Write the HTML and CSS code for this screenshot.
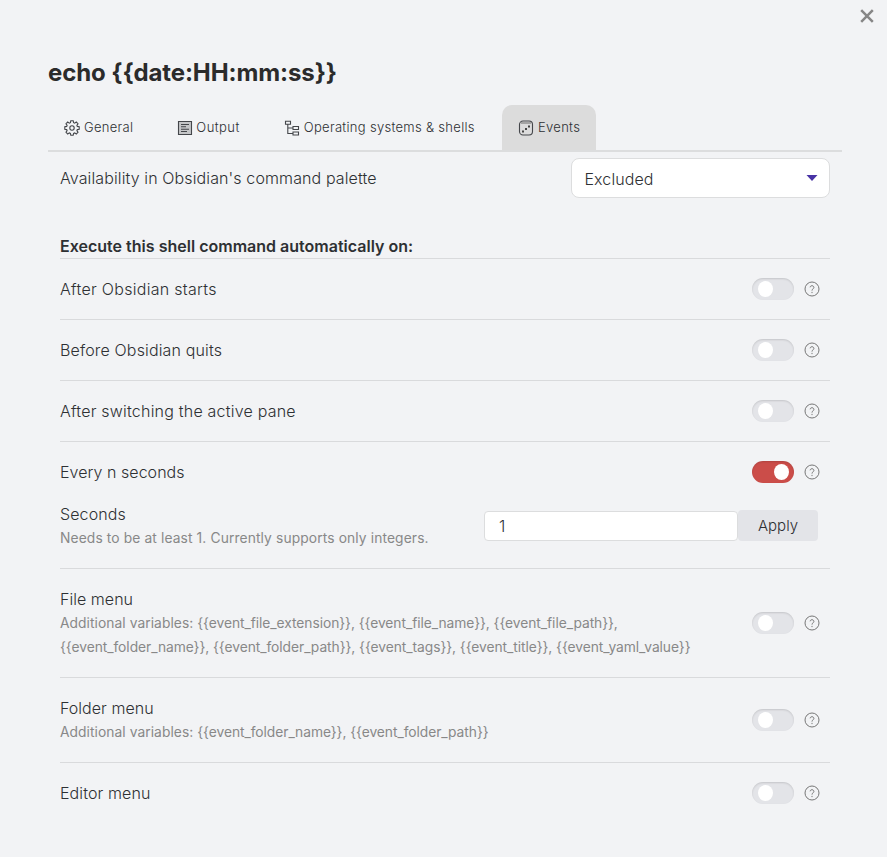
FILE: index.html
```
<!DOCTYPE html>
<html lang="en">
<head>
<meta charset="utf-8">
<title>echo {{date:HH:mm:ss}}</title>
<link rel="stylesheet" href="styles.css">
</head>
<body>
<svg width="0" height="0" class="defs">
  <symbol id="help" viewBox="0 0 16 16"><circle cx="8" cy="8" r="7" fill="none" stroke="currentColor"/><path d="M6.100 6.300a1.900 1.700 0 1 1 3 1.500C8.300 8.400 8 8.700 8 9.600M8 10.900v1.200" fill="none" stroke="currentColor"/></symbol>
</svg>
<main class="modal">
  <button class="close" aria-label="Close"><svg width="14" height="14" viewBox="0 0 14 14"><path d="M1.200 1.200l11.600 11.600M12.800 1.200L1.200 12.800" stroke="#868686" stroke-width="2.500"/></svg></button>
  <h1>echo {{date:HH:mm:ss}}</h1>
  <nav class="tabs">
    <div class="tab general"><svg class="icon" viewBox="0 0 16 16"><path d="M6.800 .8h2.400l.4 1.900 1 .4 1.700-1.100 1.700 1.700-1.100 1.700.4 1 1.900.4v2.400l-1.900.4-.4 1 1.100 1.700-1.700 1.700-1.700-1.100-1 .4-.4 1.900H6.800l-.4-1.900-1-.4L3.700 14 2 12.300l1.100-1.700-.4-1-1.900-.4V6.800l1.900-.4.4-1L2 3.700 3.700 2l1.700 1.100 1-.4z"/><circle cx="8" cy="8" r="2.200"/></svg><span>General</span></div>
    <div class="tab output"><svg class="icon" viewBox="0 0 16 16"><path class="fill" d="M1.500 1.500h13v13h-13z"/><path d="M4 4.500h8M4 6.800h5M4 9.200h8M4 11.500h6"/></svg><span>Output</span></div>
    <div class="tab systems"><svg class="icon" viewBox="0 0 16 16"><path d="M1.500 1.200h5v3h-5zM9 6.500h5.500v3H9zM9 12h5.500v3H9zM3.800 4.200v9.300H9M3.800 8H9"/></svg><span>Operating systems &amp; shells</span></div>
    <div class="tab events active"><svg class="icon" viewBox="0 0 16 16"><rect x="1.500" y="1" width="13" height="14" rx="3.500"/><path class="lid" d="M3 3h10"/><path class="dots" d="M4 10.500h2v2H4zM7 8h2v2H7zM10 5.500h2v2h-2z"/></svg><span>Events</span></div>
  </nav>
  <section class="content">
    <div class="palette"><span class="name n0">Availability in Obsidian's command palette</span><div class="select"><span>Excluded</span><svg width="12" height="6" viewBox="0 0 12 6"><path d="M.5 0h11L6 6z" fill="#4833a5"/></svg></div></div>
    <h2><span>Execute this shell command automatically on:</span></h2>
    <div class="row"><span class="name n1">After Obsidian starts</span><i class="toggle"></i><svg class="help"><use href="#help"/></svg></div>
    <div class="row"><span class="name n2">Before Obsidian quits</span><i class="toggle"></i><svg class="help"><use href="#help"/></svg></div>
    <div class="row"><span class="name n3">After switching the active pane</span><i class="toggle"></i><svg class="help"><use href="#help"/></svg></div>
    <div class="row"><span class="name n4">Every n seconds</span><i class="toggle on"></i><svg class="help"><use href="#help"/></svg></div>
    <div class="seconds"><div class="info"><div class="name">Seconds</div><div class="desc needs"><span>Needs to be at least 1. Currently supports only integers.</span></div></div><div class="field">1</div><div class="apply">Apply</div></div>
    <div class="row file"><div class="info"><div class="name n4">File menu</div><div class="desc"><span>Additional variables: <span class="vars">{{event_file_extension}}, {{event_file_name}}, {{event_file_path}},</span></span><br><span class="vars">{{event_folder_name}}, {{event_folder_path}}, {{event_tags}}, {{event_title}}, {{event_yaml_value}}</span></div></div><i class="toggle"></i><svg class="help"><use href="#help"/></svg></div>
    <div class="row folder"><div class="info"><div class="name n4">Folder menu</div><div class="desc"><span>Additional variables: <span class="vars">{{event_folder_name}}, {{event_folder_path}}</span></span></div></div><i class="toggle"></i><svg class="help"><use href="#help"/></svg></div>
    <div class="row"><span class="name">Editor menu</span><i class="toggle"></i><svg class="help"><use href="#help"/></svg></div>
  </section>
</main>
</body>
</html>
```
FILE: styles.css
```
* { box-sizing: border-box; }
body { margin: 0; background: #f2f3f5; color: #2e3033; font-family: Inter, sans-serif; font-size: 16px; font-weight: 300; }
.defs { position: absolute; }
.modal { position: relative; height: 857px; padding: 56px 45px 0 48px; overflow: hidden; white-space: nowrap; }
.close { position: absolute; top: 9px; right: 13px; width: 14px; height: 14px; padding: 0; border: 0; background: none; }
.close svg { display: block; }
h1 { margin: 0; height: 49px; font-size: 24px; line-height: 34px; font-weight: 700; letter-spacing: -.1px; color: #2b2b2b; }
.tabs { display: flex; height: 47px; border-bottom: 2px solid #dcddde; }
.tab { display: flex; align-items: center; gap: 4px; height: 45px; padding: 0 16px; border-radius: 10px 10px 0 0; font-size: 13px; letter-spacing: .3px; }
.tab span { margin-top: -2px; }
.output { margin-left: 12px; gap: 3px; }
.output span { letter-spacing: .45px; }
.systems { margin-left: 12px; gap: 4px; }
.events { margin-left: auto; margin-right: 246px; width: 94px; }
.active { background: #dcdcdc; }
.icon { flex: none; width: 16px; height: 16px; fill: none; stroke: #44464a; stroke-width: 1.1; }
.icon .fill { fill: #c5c6c8; }
.icon .lid { stroke: #777; }
.icon .dots { fill: #444; stroke: none; }
.content { width: 770px; margin-left: 12px; }
.palette { display: flex; align-items: center; justify-content: space-between; height: 52px; }
.select { display: flex; align-items: center; justify-content: space-between; width: 259px; height: 40px; padding: 2px 11px 0 12.5px; border: 1px solid #dcddde; border-radius: 8px; background: #fff; letter-spacing: .1px; }
.select svg { margin-top: -3px; }
h2 { height: 55px; margin: 0; padding-top: 30px; border-bottom: 1px solid #d9dadc; font-size: 16px; line-height: 25px; font-weight: 600; letter-spacing: .01px; }
.row { display: flex; align-items: center; height: 61px; border-bottom: 1px solid #d9dadc; }
.row:last-child, .row:has(.on) { border-color: transparent; }
.name { line-height: 24px; letter-spacing: .1px; }
.n0 { letter-spacing: .115px; }
.n1 { letter-spacing: .29px; }
.n2 { letter-spacing: .15px; }
.n3 { letter-spacing: .21px; }
.n4 { letter-spacing: .04px; }
.toggle { flex: none; width: 42px; height: 22px; margin-left: auto; padding: 3px 6px; border-radius: 11px; background: #e3e4e8; box-shadow: inset 0 1px 2px #0002; }
.toggle::after { content: ""; display: block; width: 15px; height: 16px; border-radius: 50%; background: #fff; }
.toggle.on { background: #cb4d49; padding-left: 22px; }
.help { flex: none; width: 16px; height: 16px; margin: 0 10px; color: #777; }
.seconds { display: flex; align-items: center; height: 66px; padding: 0 12px 20px 0; border-bottom: 1px solid #d9dadc; }
.info { flex: 1; }
.desc { font-size: 13.8px; line-height: 24px; font-weight: 400; letter-spacing: .06px; color: #888; }
.needs { letter-spacing: .12px; }
.vars { letter-spacing: -.05px; }
.field { width: 254px; height: 30px; padding-left: 14px; border: 1px solid #dcddde; border-radius: 4px; background: #fff; line-height: 29px; }
.apply { width: 80px; height: 31px; border-radius: 4px; background: #e3e4e8; font-size: 15px; line-height: 31px; text-align: center; }
.file { height: 109px; }
.folder { height: 85px; }
```
